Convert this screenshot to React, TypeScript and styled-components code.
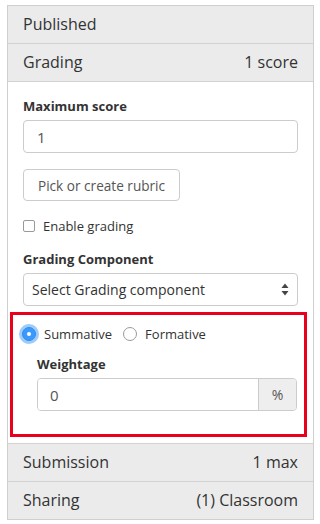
import React from "react"
import styled, { createGlobalStyle } from "styled-components"

const GlobalStyle = createGlobalStyle`
  html, body {
    margin: 0;
    padding: 0;
    background: #fff;
  }
  body {
    font-family: "Open Sans", "Liberation Sans", sans-serif;
    color: #333;
    -webkit-font-smoothing: antialiased;
  }
  * {
    box-sizing: border-box;
  }
`

interface SectionRow {
  label: string
  value?: string
}

export default function App() {
  const top: SectionRow[] = [
    { label: "Published" },
    { label: "Grading", value: "1 score" },
  ]
  const bottom: SectionRow[] = [
    { label: "Submission", value: "1 max" },
    { label: "Sharing", value: "(1) Classroom" },
  ]

  return (
    <>
      <GlobalStyle />
      <Panel>
        {top.map((row) => (
          <Header key={row.label}>
            <span>{row.label}</span>
            {row.value && <span>{row.value}</span>}
          </Header>
        ))}

        <Body>
          <Label>Maximum score</Label>
          <TextInput defaultValue="1" />

          <Button type="button">Pick or create rubric</Button>

          <CheckRow>
            <CheckBox />
            <span>Enable grading</span>
          </CheckRow>

          <Label $top={14}>Grading Component</Label>
          <Select>
            <span>Select Grading component</span>
            <svg width="8" height="13" viewBox="0 0 8 13">
              <path d="M4 0.5 L7.5 5 L0.5 5 Z" fill="#444" />
              <path d="M4 12.5 L7.5 8 L0.5 8 Z" fill="#444" />
            </svg>
          </Select>

          <Highlight>
            <RadioRow>
              <RadioOption>
                <Radio $checked />
                <span>Summative</span>
              </RadioOption>
              <RadioOption>
                <Radio />
                <span>Formative</span>
              </RadioOption>
            </RadioRow>
            <WeightBlock>
              <Label>Weightage</Label>
              <InputGroup>
                <GroupInput defaultValue="0" />
                <Addon>%</Addon>
              </InputGroup>
            </WeightBlock>
          </Highlight>
        </Body>

        {bottom.map((row, i) => (
          <Header key={row.label} $last={i === bottom.length - 1}>
            <span>{row.label}</span>
            <span>{row.value}</span>
          </Header>
        ))}
      </Panel>
    </>
  )
}

const Panel = styled.div`
  width: 307px;
  margin: 5px 0 0 7px;
  border: 1px solid #cfcfcf;
  background: #fff;
`

const Header = styled.div<{ $last?: boolean }>`
  display: flex;
  justify-content: space-between;
  align-items: center;
  height: ${(p) => (p.$last ? 37 : 38)}px;
  padding: 0 15px 1px;
  background: #ebebeb;
  border-bottom: ${(p) => (p.$last ? "none" : "1px solid #d2d2d2")};
  font-size: 16px;
  color: #333;
`

const Body = styled.div`
  padding: 15px 15px 6px;
  border-bottom: 1px solid #d2d2d2;
`

const Label = styled.div<{ $top?: number }>`
  margin-top: ${(p) => p.$top ?? 0}px;
  margin-bottom: 5px;
  font-size: 13px;
  line-height: 18px;
  font-weight: 700;
  color: #333;
`

const TextInput = styled.input`
  display: block;
  width: 100%;
  height: 33px;
  padding: 0 13px;
  border: 1px solid #ccc;
  border-radius: 4px;
  font-family: inherit;
  font-size: 15px;
  color: #555;
  outline: none;
`

const Button = styled.button`
  display: block;
  height: 32px;
  margin-top: 16px;
  padding: 0 14px;
  border: 1px solid #ccc;
  border-radius: 4px;
  background: #fff;
  font-family: inherit;
  font-size: 13.6px;
  color: #555;
`

const CheckRow = styled.label`
  display: flex;
  align-items: center;
  gap: 8px;
  margin-top: 15px;
  height: 20px;
  font-size: 13px;
  color: #333;
`

const CheckBox = styled.span`
  width: 12px;
  height: 12px;
  border: 1px solid #9a9a9a;
  border-radius: 2px;
  background: #fff;
`

const Select = styled.div`
  display: flex;
  align-items: center;
  justify-content: space-between;
  height: 33px;
  padding: 0 8px;
  border: 1px solid #ccc;
  border-radius: 4px;
  font-size: 14px;
  color: #333;
`

const Highlight = styled.div`
  margin: 6px -9px 0 -13px;
  padding: 9px 7px 23px 9px;
  border: 3px solid #e8001c;
`

const RadioRow = styled.div`
  display: flex;
  align-items: center;
  gap: 11px;
  height: 20px;
  font-size: 13px;
  color: #333;
`

const RadioOption = styled.label`
  display: flex;
  align-items: center;
  gap: 8px;
`

const Radio = styled.span<{ $checked?: boolean }>`
  position: relative;
  width: 14px;
  height: 14px;
  border-radius: 50%;
  border: 1px solid ${(p) => (p.$checked ? "#2b8ef0" : "#9a9a9a")};
  background: ${(p) => (p.$checked ? "#3b99fc" : "#fff")};
  box-shadow: ${(p) => (p.$checked ? "0 0 0 3px rgba(80, 160, 245, 0.55)" : "none")};

  &::after {
    content: "";
    display: ${(p) => (p.$checked ? "block" : "none")};
    position: absolute;
    left: 4px;
    top: 4px;
    width: 4px;
    height: 4px;
    border-radius: 50%;
    background: #fff;
  }
`

const WeightBlock = styled.div`
  margin-top: 11px;
  padding-left: 15px;
`

const InputGroup = styled.div`
  display: flex;
  height: 33px;
  border: 1px solid #ccc;
  border-radius: 4px;
  overflow: hidden;
`

const GroupInput = styled.input`
  flex: 1;
  min-width: 0;
  padding: 0 12px;
  border: none;
  font-family: inherit;
  font-size: 15px;
  color: #555;
  outline: none;
`

const Addon = styled.div`
  display: flex;
  align-items: center;
  justify-content: center;
  width: 38px;
  border-left: 1px solid #ccc;
  background: #eee;
  font-size: 14px;
  color: #555;
`
